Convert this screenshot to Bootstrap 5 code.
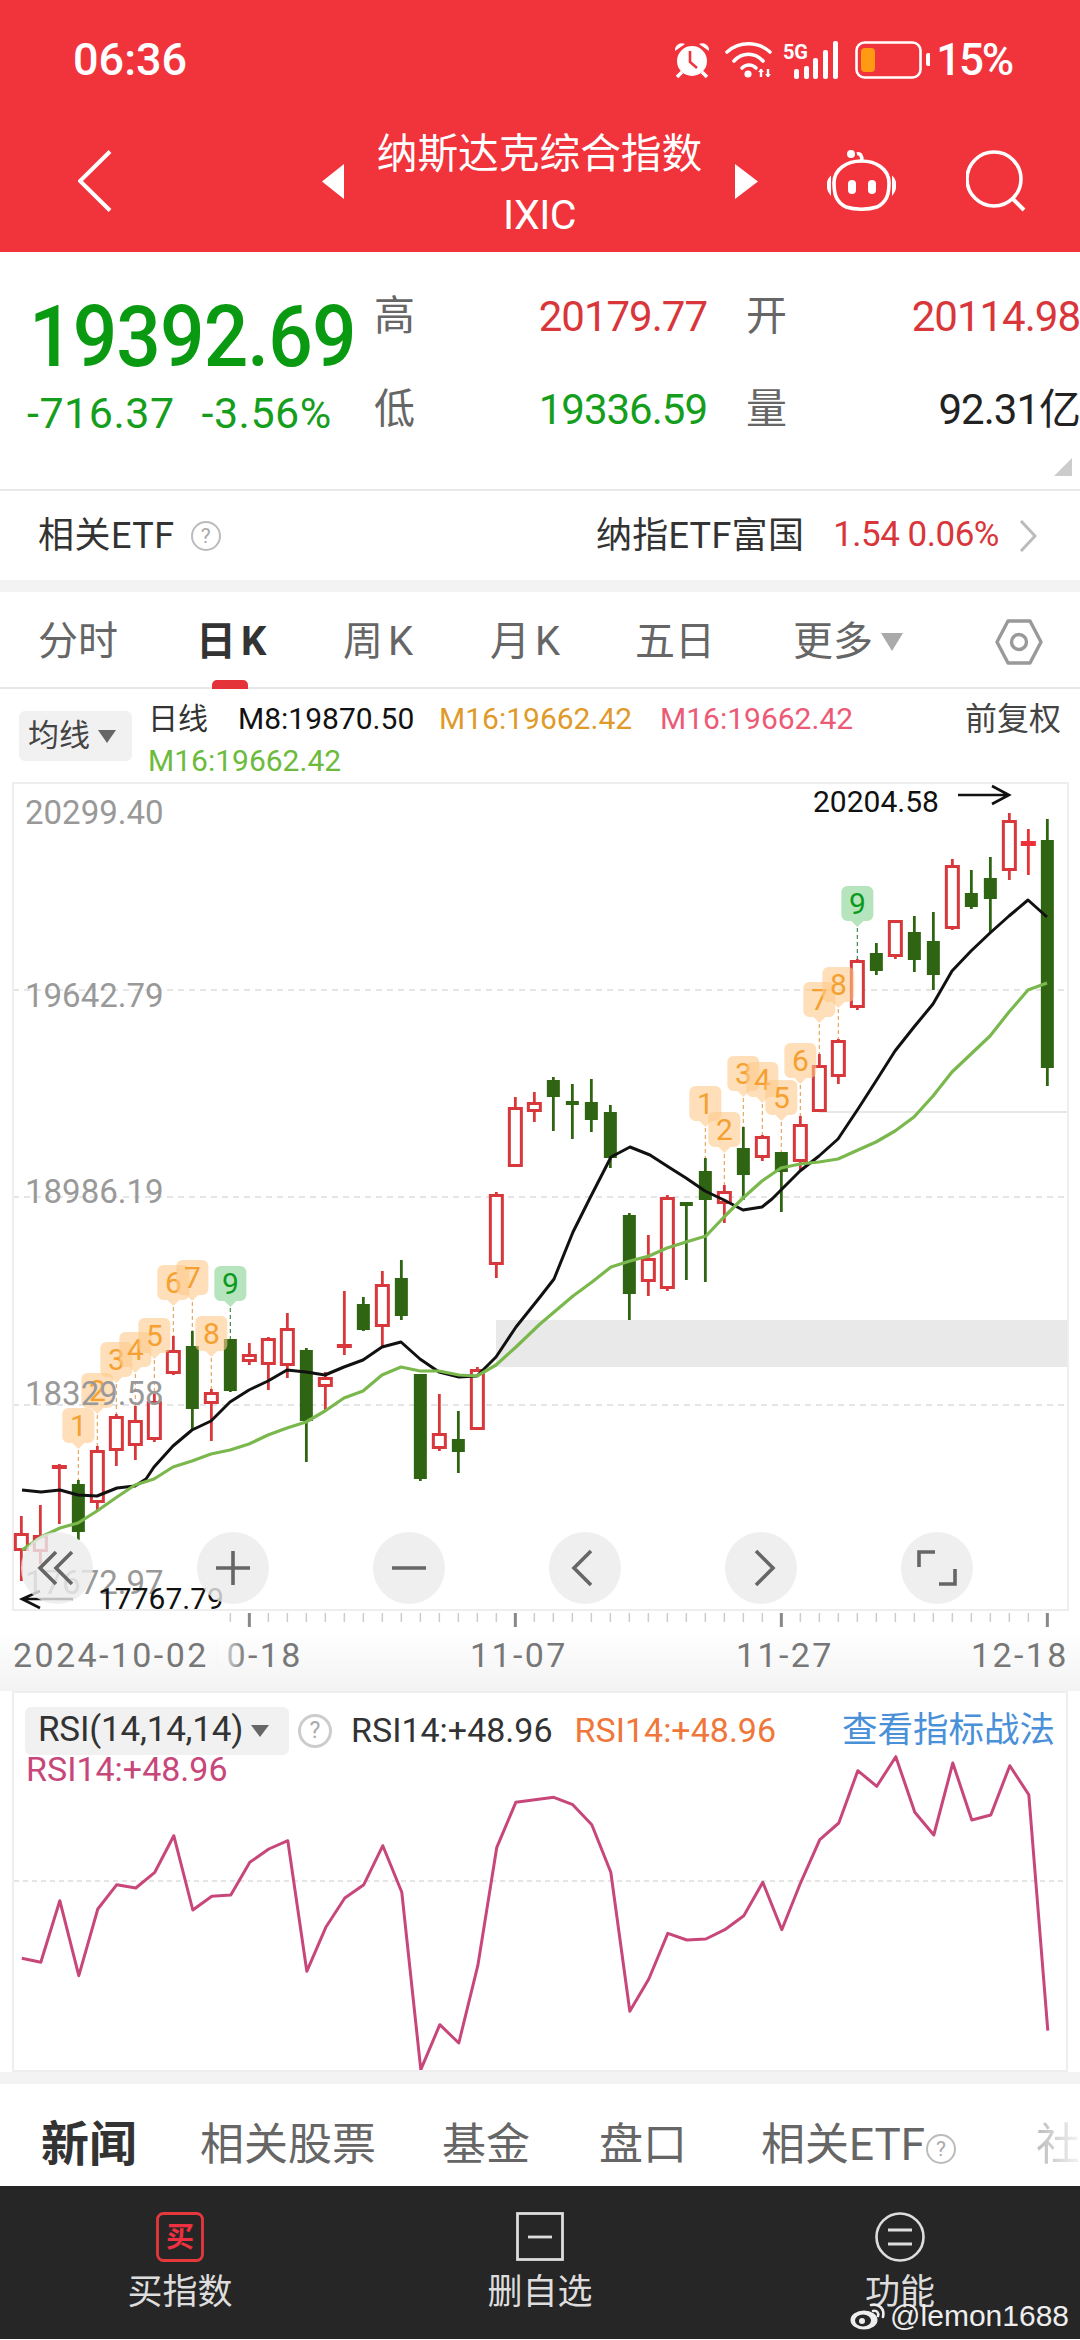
<!DOCTYPE html>
<html lang="zh-CN">
<head>
<meta charset="utf-8">
<title>纳斯达克综合指数</title>
<link href="https://cdn.jsdelivr.net/npm/bootstrap@5.3.0/dist/css/bootstrap.min.css" rel="stylesheet">
<style>
html,body{margin:0;width:1080px;height:2340px;overflow:hidden;background:#fff}
body{font-family:Roboto,"Noto Sans CJK SC",sans-serif;color:#333}
svg{display:block;flex:none}
svg text{font-family:Roboto,"Noto Sans CJK SC",sans-serif}
.hdr{height:252px;background:#f1333c;color:#fff}
.stbar{height:120px;padding:0 68px 0 73px}
.clock{font-size:45px;font-weight:500;line-height:120px}
.pct{font-size:44px;font-weight:500;margin-left:6px;letter-spacing:-2.200px}
.gap-a{margin-left:14px}.gap-b{margin-left:11px}.gap-c{margin-left:16px}
.navr{height:122px;padding-left:78px}
.ttl{width:391px;height:122px;padding-top:4px;text-align:center;line-height:61px}
.ttl-a{font-size:40.7px}
.ttl-b{font-size:41px;letter-spacing:-.5px}
.ml-tri{margin-left:210px}.ml-rob{margin-left:69px}.ml-sea{margin-left:70px}
.qt{height:237px}
.qt-l{width:374px;padding:45px 0 0 27px}
.pr{font-size:85px;line-height:80px;color:#0a9a12;letter-spacing:-1px;margin-left:2px;font-weight:500;white-space:nowrap;transform:scaleX(.923);transform-origin:left center}
.chg{font-size:43px;line-height:60px;color:#149e1c;letter-spacing:.5px;white-space:nowrap;margin-top:6px}
.chg span+span{margin-left:27px}
.qt-r{display:grid;grid-template-columns:41px 292px 80px 293px;grid-auto-rows:93px;padding-top:18px;align-items:center;font-size:41px;line-height:1;color:#666}
.v{font-size:42px;text-align:right;letter-spacing:-1px;white-space:nowrap}
.lb2{padding-left:39px}
.up{color:#d8363a}.dn{color:#149e1c}.nt{color:#222}
.corner{right:8px;top:206px;width:18px;height:18px;background:#ccc;clip-path:polygon(100% 0,100% 100%,0 100%)}
.etf{height:91px;padding:0 43px 0 38px;border-top:2px solid #e8e8e8;font-size:36px;letter-spacing:.5px}
.etf-n{font-size:36px;color:#333;letter-spacing:.3px}
.etf-v{font-size:35px;color:#d8363a;margin:0 20px 0 29px;letter-spacing:-.5px}
.q{border:2px solid #bbb;border-radius:50%;width:30px;height:30px;margin-left:16px;color:#aaa;font-size:21px;line-height:26px;text-align:center;letter-spacing:0}
.band{background:#f3f3f3}
.tabs{height:97px;display:grid;grid-template-columns:158px 147px 147px 145px 158px auto 1fr;padding-left:38px;align-items:center;font-size:40px;color:#666;border-bottom:2px solid #e8e8e8}
.tabs>div{display:flex;align-items:center;height:97px;padding-top:2px;white-space:nowrap}
.tab-on{color:#333;font-weight:700;position:relative}
.tab-on::after{content:"";position:absolute;left:16px;bottom:0;width:36px;height:9px;background:#e5333a;border-radius:5px 5px 0 0}
.kk{margin-left:5px}
.ind{height:93px;padding:9px 19px 0}
.chip{background:#f1f1f1;border-radius:6px}
.ch-ma{width:113px;height:50px;margin-top:13px;padding-left:9px;font-size:31px;color:#444}
.ind-m{margin-left:16px}
.ind-l{height:42px;font-size:30px;line-height:42px;white-space:nowrap}
.ind-l span{display:inline-block}
.w1{width:90px;color:#333}.w2{width:201px;color:#111}.w3{width:221px;color:#e09a2a}.w4{width:200px;color:#ec5b76}.w5{color:#6cbb3c}
.fq{font-size:32px;color:#444;line-height:42px}
.rsi{width:1056px;height:381px;margin-left:12px;border:2px solid #eee;display:grid}
.rsi>*{grid-area:1/1}
.rsi-t{padding:11px 0 0 11px}
.ch-rsi{width:264px;height:48px;padding-left:13px;font-size:35px;color:#333;letter-spacing:-.2px;white-space:nowrap}
.rv{font-size:34px;white-space:nowrap}
.q2{border:3px solid #ccc;border-radius:50%;width:34px;height:34px;margin:0 19px 0 9px;color:#aaa;font-size:23px;line-height:28px;text-align:center}
.lnk{font-size:35.500px;color:#4a90d9;margin-left:auto;margin-right:11px}
.rv3{font-size:34px;color:#c8477a;line-height:38px;margin:-7px 0 0 1px}
.ntabs{height:102px;display:grid;grid-template-columns:159px 242px 157px 162px 275px 1fr;padding:20px 0 0 41px;align-items:center;font-size:44px;color:#666;white-space:nowrap;overflow:hidden}
.ntabs .act{font-size:48px;font-weight:700;color:#333}
.ntabs .fadetxt{color:transparent;background:linear-gradient(90deg,#bbb,#f4f4f4);-webkit-background-clip:text;background-clip:text}
.ntabs .q3{display:inline-block;width:30px;height:30px;border:2px solid #bbb;border-radius:50%;font-size:21px;line-height:26px;text-align:center;color:#aaa;vertical-align:4px;margin-left:1px}
.btm{height:153px;background:#262626;color:#ddd;padding-top:26px;font-size:35px;position:relative}
.btm .lbl{margin-top:9px;line-height:44px;text-align:center}
.btm .wm{position:absolute;width:auto;right:11px;bottom:0;padding:0;color:#eee;font-size:30px;font-family:"Liberation Sans",sans-serif;line-height:46px}
</style>
</head>
<body>
<header class="hdr">
  <div class="stbar d-flex align-items-center">
    <div class="clock">06:36</div>
    <svg class="ms-auto" width="38" height="38" viewBox="0 0 38 38"><path d="M2 10a7 7 0 0 1 10-7zM36 10a7 7 0 0 0-10-7z" fill="#fff"/><circle cx="19" cy="20" r="15" fill="#fff"/><path d="M4 36l5-5M34 36l-5-5" stroke="#fff" stroke-width="3.5"/><path d="M17 10v11l7 6" fill="none" stroke="#f1333c" stroke-width="2.6"/></svg>
    <svg class="gap-a" width="47" height="38" viewBox="0 0 47 38"><g fill="none" stroke="#fff" stroke-width="3.6" stroke-linecap="round"><path d="M2 11C14 0 33 0 45 11"/><path d="M9 20C17 11 30 11 38 20"/><path d="M17 27c4-4 10-4 14 0"/></g><circle cx="23" cy="33" r="3.6" fill="#fff"/><path d="M36 28v8M43 28v8" stroke="#fff" stroke-width="2.4"/><path d="M33 31l3-3 3 3zM40 33l3 3 3-3z" fill="#fff"/></svg>
    <svg class="gap-b" width="56" height="38" viewBox="0 0 56 38"><text x="0" y="18" font-size="20" font-weight="700" fill="#fff" textLength="25">5G</text><g fill="#fff"><rect x="11" y="28" width="5" height="10" rx="2"/><rect x="21" y="25" width="5" height="13" rx="2"/><rect x="30" y="17" width="5" height="21" rx="2"/><rect x="40" y="9" width="5" height="29" rx="2"/><rect x="50" y="0" width="5" height="38" rx="2"/></g></svg>
    <svg class="gap-c" width="75" height="38" viewBox="0 0 75 38"><rect x="1.5" y="1.5" width="64" height="35" rx="8" fill="none" stroke="#fff" stroke-width="2.6"/><rect x="6" y="7" width="14" height="24" rx="4" fill="#ff9a12"/><rect x="71" y="12" width="4.5" height="13" rx="2" fill="#fff"/></svg>
    <div class="pct">15%</div>
  </div>
  <div class="navr d-flex align-items-center">
    <svg width="34" height="62" viewBox="0 0 34 62"><path d="M32 1.500L2 31l30 29.500" fill="none" stroke="#fff" stroke-width="4"/></svg>
    <svg class="ml-tri" width="22" height="35" viewBox="0 0 22 35"><path d="M22 0v35L0 17.500z" fill="#fff"/></svg>
    <div class="ttl"><div class="ttl-a">纳斯达克综合指数</div><div class="ttl-b">IXIC</div></div>
    <svg width="23" height="35" viewBox="0 0 23 35"><path d="M0 0v35l23-17.500z" fill="#fff"/></svg>
    <svg class="ml-rob" width="69" height="62" viewBox="0 0 69 62"><g fill="none" stroke="#fff" stroke-width="3.600"><path d="M30 4c3-1 5 1 5 7"/><path d="M7 33C7 19 20 11 34.500 11S62 19 62 33c0 11-2 19-12 24-9 3-22 3-31 0C9 52 7 44 7 33z"/></g><circle cx="24" cy="4" r="4" fill="#fff"/><rect x="21" y="30" width="8" height="14" rx="4" fill="#fff"/><rect x="41" y="30" width="8" height="14" rx="4" fill="#fff"/><path d="M3 28c-3 3-3 11 0 15zM66 28c3 3 3 11 0 15z" fill="#fff" stroke="#fff" stroke-width="2"/></svg>
    <svg class="ml-sea" width="60" height="62" viewBox="0 0 60 62"><circle cx="28" cy="29" r="27" fill="none" stroke="#fff" stroke-width="3.600"/><path d="M47 49l11 11" stroke="#fff" stroke-width="4"/></svg>
  </div>
</header>

<section class="qt d-flex position-relative">
  <div class="qt-l">
    <div class="pr">19392.69</div>
    <div class="chg"><span>-716.37</span><span>-3.56%</span></div>
  </div>
  <div class="qt-r">
    <div>高</div><div class="v up">20179.77</div><div class="lb2">开</div><div class="v up">20114.98</div>
    <div>低</div><div class="v dn">19336.59</div><div class="lb2">量</div><div class="v nt">92.31亿</div>
  </div>
  <div class="corner position-absolute"></div>
</section>

<section class="etf d-flex align-items-center">
  <div>相关ETF</div><div class="q">?</div>
  <div class="etf-n ms-auto">纳指ETF富国</div><div class="etf-v">1.54 0.06%</div>
  <svg width="18" height="32" viewBox="0 0 18 32"><path d="M2 1l14 15L2 31" fill="none" stroke="#bbb" stroke-width="3"/></svg>
</section>
<div class="band" style="height:12px"></div>

<nav class="tabs">
  <div>分时</div>
  <div class="tab-on">日<span class="kk">K</span></div>
  <div>周<span class="kk">K</span></div>
  <div>月<span class="kk">K</span></div>
  <div>五日</div>
  <div>更多<svg class="ms-2" width="22" height="18" viewBox="0 0 22 18"><path d="M0 0h22L11 18z" fill="#aaa"/></svg></div>
  <div class="justify-content-end" style="padding-right:37px"><svg width="48" height="48" viewBox="0 0 48 48"><path d="M2 24L13 3h22l11 21-11 21H13z" fill="none" stroke="#999" stroke-width="3.400" stroke-linejoin="round"/><circle cx="24" cy="24" r="7.500" fill="none" stroke="#999" stroke-width="3.400"/></svg></div>
</nav>

<section class="ind d-flex align-items-start">
  <div class="chip ch-ma d-flex align-items-center">均线<svg class="ms-2" width="18" height="13" viewBox="0 0 18 13"><path d="M0 0h18L9 13z" fill="#666"/></svg></div>
  <div class="ind-m flex-grow-1">
    <div class="ind-l d-flex"><span class="w1">日线</span><span class="w2">M8:19870.50</span><span class="w3">M16:19662.42</span><span class="w4">M16:19662.42</span><span class="fq ms-auto">前复权</span></div>
    <div class="ind-l"><span class="w5">M16:19662.42</span></div>
  </div>
</section>

<svg id="kchart" width="1080" height="909" viewBox="0 783 1080 909"></svg>

<section class="rsi">
  <svg id="rsiline" width="1052" height="377" viewBox="14 1694 1052 377"></svg>
  <div class="rsi-t">
    <div class="d-flex align-items-center">
      <div class="chip ch-rsi d-flex align-items-center">RSI(14,14,14)<svg class="ms-2" width="18" height="12" viewBox="0 0 18 12"><path d="M0 0h18L9 12z" fill="#666"/></svg></div>
      <div class="q2">?</div>
      <div class="rv" style="color:#333;margin-right:22px">RSI14:+48.96</div>
      <div class="rv" style="color:#f0763a">RSI14:+48.96</div>
      <div class="lnk">查看指标战法</div>
    </div>
    <div class="rv3">RSI14:+48.96</div>
  </div>
</section>
<div class="band" style="height:12px"></div>

<nav class="ntabs">
  <div class="act">新闻</div><div>相关股票</div><div>基金</div><div>盘口</div><div>相关ETF<span class="q3">?</span></div><div class="fadetxt">社</div>
</nav>

<footer class="btm row g-0 m-0">
  <div class="col-4 d-flex flex-column align-items-center">
    <svg width="48" height="50" viewBox="0 0 48 50"><rect x="1.500" y="1.500" width="45" height="47" rx="6" fill="none" stroke="#e5383d" stroke-width="2.800"/><text x="24" y="35" font-size="28" font-weight="700" fill="#ee3040" text-anchor="middle">买</text></svg>
    <div class="lbl">买指数</div>
  </div>
  <div class="col-4 d-flex flex-column align-items-center">
    <svg width="48" height="50" viewBox="0 0 48 50"><rect x="1.500" y="1.500" width="45" height="46" fill="none" stroke="#ddd" stroke-width="2.800"/><path d="M12 25h24" stroke="#ddd" stroke-width="2.800"/></svg>
    <div class="lbl">删自选</div>
  </div>
  <div class="col-4 d-flex flex-column align-items-center">
    <svg width="50" height="50" viewBox="0 0 50 50"><circle cx="25" cy="25" r="23.500" fill="none" stroke="#ddd" stroke-width="2.600"/><path d="M13 18h24M13 32h24" stroke="#ddd" stroke-width="2.800"/></svg>
    <div class="lbl">功能</div>
  </div>
  <div class="wm d-flex align-items-center">
    <svg class="me-1" width="36" height="28" viewBox="0 0 36 28"><ellipse cx="14" cy="18" rx="13.500" ry="9.500" fill="#eee"/><ellipse cx="13" cy="18.500" rx="8" ry="6" fill="#262626"/><circle cx="12" cy="19" r="3" fill="#eee"/><path d="M21 3c8-2 14 4 12 12M23 9c4-1 6 2 5 5" fill="none" stroke="#eee" stroke-width="2.600" stroke-linecap="round"/></svg>@lemon1688
  </div>
</footer>

<script>
var R='#d8383c',G='#2f6512';
var K=[[1517,1534,1552,1582,'r'],[1506,1536,1553,1565,'r'],[1465,1466,1469,1525,'r'],[1481,1485,1533,1541,'g'],[1447,1451,1504,1512,'r'],[1415,1417,1452,1467,'r'],[1407,1421,1447,1461,'r'],[1395,1402,1441,1443,'r'],[1337,1351,1375,1376,'r'],[1332,1347,1410,1431,'g'],[1390,1393,1405,1442,'r'],[1340,1340,1392,1393,'g'],[1344,1355,1363,1366,'r'],[1338,1339,1366,1391,'r'],[1314,1329,1367,1379,'r'],[1349,1351,1422,1463,'g'],[1373,1378,1388,1411,'r'],[1292,1345,1349,1356,'r'],[1298,1305,1331,1332,'g'],[1272,1285,1328,1347,'r'],[1261,1279,1317,1321,'g'],[1375,1375,1480,1482,'g'],[1395,1434,1450,1452,'r'],[1412,1440,1453,1474,'g'],[1368,1370,1431,1431,'r'],[1193,1195,1266,1279,'r'],[1098,1108,1168,1168,'r'],[1093,1103,1113,1123,'r'],[1078,1081,1098,1132,'g'],[1085,1102,1104,1140,'g'],[1080,1103,1121,1133,'g'],[1106,1113,1159,1169,'g'],[1214,1216,1295,1321,'g'],[1236,1259,1283,1297,'r'],[1196,1198,1290,1292,'r'],[1203,1203,1205,1281,'g'],[1159,1172,1201,1283,'g'],[1186,1192,1205,1224,'r'],[1128,1149,1176,1201,'g'],[1136,1137,1159,1162,'r'],[1153,1153,1173,1213,'g'],[1117,1125,1163,1172,'r'],[1055,1066,1113,1113,'r'],[1040,1041,1078,1085,'r'],[960,961,1009,1011,'r'],[944,954,972,976,'g'],[921,921,958,960,'r'],[917,933,961,973,'g'],[913,942,976,991,'g'],[860,866,930,931,'r'],[871,894,908,910,'g'],[858,879,900,934,'g'],[814,821,872,881,'r'],[830,842,847,876,'x'],[820,841,1069,1087,'g']];
function X(i){return 21.35+19*i}
var s='';
s+='<defs><linearGradient id="fd" x1="0" y1="0" x2="0" y2="1"><stop offset="0" stop-color="#fff"/><stop offset="1" stop-color="#f3f3f3"/></linearGradient><linearGradient id="dt" gradientUnits="userSpaceOnUse" x1="216" y1="0" x2="246" y2="0"><stop offset="0" stop-color="#777" stop-opacity="0"/><stop offset="1" stop-color="#777"/></linearGradient></defs>';
s+='<rect x="496" y="1321" width="572" height="47" fill="#e9e9e9"/>';
s+='<rect x="819" y="1112" width="249" height="2" fill="#e8e8e8"/>';
[991,1198,1406].forEach(function(y){s+='<path d="M13 '+y+'H1067" stroke="#ddd" stroke-width="1.500" stroke-dasharray="6 5"/>'});
s+='<rect x="13" y="784" width="1055" height="827" fill="none" stroke="#eee" stroke-width="2"/>';
s+='<rect x="0" y="1630" width="1080" height="62" fill="url(#fd)"/>';
for(var i=11;i<=54;i++){var mj=(i==12||i==26||i==40||i==54);s+='<rect x="'+(X(i)-(mj?1.5:.75))+'" y="1614" width="'+(mj?3:1.5)+'" height="'+(mj?14:9)+'" fill="'+(mj?'#888':'#ccc')+'"/>'}
K.forEach(function(c,i){var x=X(i),col=c[4]=='g'?G:(c[4]=='x'?'#ee3038':R);
 s+='<rect x="'+(x-1.4)+'" y="'+c[0]+'" width="2.800" height="'+(c[3]-c[0])+'" fill="'+col+'"/>';
 if(c[4]=='g'||c[4]=='x'||c[2]-c[1]<6){var w=c[4]=='g'?13:15;s+='<rect x="'+(x-w/2)+'" y="'+c[1]+'" width="'+w+'" height="'+Math.max(c[2]-c[1],4)+'" fill="'+col+'"/>'}
 else{s+='<rect x="'+(x-6)+'" y="'+(c[1]+1.5)+'" width="12" height="'+(c[2]-c[1]-3)+'" fill="#fff" stroke="'+col+'" stroke-width="3"/>'}
});
s+='<polyline fill="none" stroke="#111" stroke-width="3" stroke-linejoin="round" points="22,1491 41,1493 60,1491 78,1496 97,1497 117,1489 135,1487 146,1480 154,1468 173,1447 192,1431 211,1422 230,1403 249,1391 268,1382 287,1371 306,1373 325,1376 344,1368 363,1361 382,1348 401,1343 420,1360 439,1373 459,1378 477,1377 496,1358 516,1328 540,1298 554,1280 573,1233 590,1199 611,1158 630,1148 650,1156 667,1167 686,1179 705,1192 724,1201 743,1211 762,1208 772,1200 800,1172 819,1157 838,1140 858,1110 876,1082 895,1052 914,1028 933,1005 952,972 971,952 990,934 1009,917 1028,901 1047,918"/>';
s+='<polyline fill="none" stroke="#7ab84e" stroke-width="3.200" stroke-linejoin="round" points="22,1551 41,1538 60,1529 78,1524 97,1512 117,1498 135,1486 154,1480 173,1468 192,1462 211,1455 230,1451 249,1445 268,1436 287,1429 306,1423 325,1412 344,1399 363,1392 382,1376 401,1368 420,1372 439,1372 459,1376 477,1377 496,1366 516,1348 540,1325 573,1297 592,1283 611,1268 630,1262 649,1257 667,1249 686,1243 706,1237 724,1218 743,1199 762,1182 781,1169 800,1165 819,1163 838,1160 858,1151 876,1143 895,1132 914,1118 933,1097 952,1073 971,1055 990,1037 1009,1013 1028,991 1047,984"/>';
var B=[[3,1409,1481,'1'],[4,1374,1447,'2'],[5,1343,1415,'3'],[6,1333,1407,'4'],[7,1319,1395,'5'],[8,1266,1337,'6'],[9,1261,1332,'7'],[10,1317,1390,'8'],[11,1267,1340,'9'],[36,1087,1159,'1'],[37,1113,1186,'2'],[38,1057,1128,'3'],[39,1063,1136,'4'],[40,1081,1153,'5'],[41,1044,1117,'6'],[42,983,1055,'7'],[43,968,1040,'8'],[44,887,960,'9']];
B.forEach(function(b){var x=X(b[0]),t=b[1],g=b[3]=='9';
 var lc=g?'#3f8a4a':'#e5a860',f=g?'#a9e0b2':'#fdc98a',tc=g?'#0a9a20':'#f5a030';
 s+='<path d="M'+x+' '+(t+42)+'V'+b[2]+'" stroke="'+lc+'" stroke-width="1.200" stroke-dasharray="4 3"/>';
 s+='<path d="M'+(x-10)+' '+t+'h20a6 6 0 0 1 6 6v23a6 6 0 0 1-6 6h-4l-6 6-6-6h-4a6 6 0 0 1-6-6v-23a6 6 0 0 1 6-6z" fill="'+f+'" fill-opacity="'+(g?.85:.6)+'"/>';
 s+='<text x="'+x+'" y="'+(t+28)+'" font-size="30" fill="'+tc+'" text-anchor="middle">'+b[3]+'</text>';
});
[['20299.40',825],['19642.79',1008],['18986.19',1204],['18329.58',1406],['17672.97',1595]].forEach(function(a){s+='<text x="25" y="'+a[1]+'" font-size="33" fill="#999">'+a[0]+'</text>'});
s+='<text x="813" y="813" font-size="30" fill="#111">20204.58</text><path d="M958 796H1009M992 787l17 9-17 9" fill="none" stroke="#111" stroke-width="2.600"/>';
s+='<text x="98" y="1610" font-size="30" fill="#111">17767.79</text><path d="M73 1600H22M40 1592l-18 8 18 9" fill="none" stroke="#111" stroke-width="2.600"/>';
[57,233,409,585,761,937].forEach(function(x){s+='<circle cx="'+x+'" cy="1569" r="36" fill="#ebebeb" fill-opacity=".8"/>'});
s+='<g fill="none" stroke="#666" stroke-width="3.600"><path d="M56 1553l-16 16 16 16M72 1553l-16 16 16 16" /><path d="M216 1569h34M233 1552v34"/><path d="M392 1569h34"/><path d="M591 1552l-17 17 17 17"/><path d="M756 1552l17 17-17 17"/><path d="M919 1568v-15h16M955 1570v15h-16"/></g>';
var d='font-size="34" letter-spacing="2.400"';
s+='<text x="205" y="1668" fill="url(#dt)" '+d+'>10-18</text>';
s+='<text x="13" y="1668" fill="#777" '+d+'>2024-10-02</text><text x="470" y="1668" fill="#777" '+d+'>11-07</text><text x="736" y="1668" fill="#777" '+d+'>11-27</text><text x="971" y="1668" fill="#777" '+d+'>12-18</text>';
document.getElementById('kchart').innerHTML=s;
var Ry=[838,850,665,890,690,617,627,580,470,693,652,648,550,510,485,877,745,657,617,500,640,1172,1037,1092,860,505,370,362,355,377,437,580,997,900,763,783,780,752,710,610,752,610,482,432,275,322,233,400,468,252,423,408,260,347,1055];
var pts=Ry.map(function(v,i){return (21.8+19*i).toFixed(1)+','+(1680+v/3).toFixed(1)}).join(' ');
document.getElementById('rsiline').innerHTML='<path d="M14 1882H1066" stroke="#ddd" stroke-width="1.500" stroke-dasharray="5 4"/><polyline fill="none" stroke="#c8477a" stroke-width="3" stroke-linejoin="round" points="'+pts+'"/>';
</script>
<script src="https://cdn.jsdelivr.net/npm/bootstrap@5.3.0/dist/js/bootstrap.bundle.min.js"></script>
</body>
</html>
